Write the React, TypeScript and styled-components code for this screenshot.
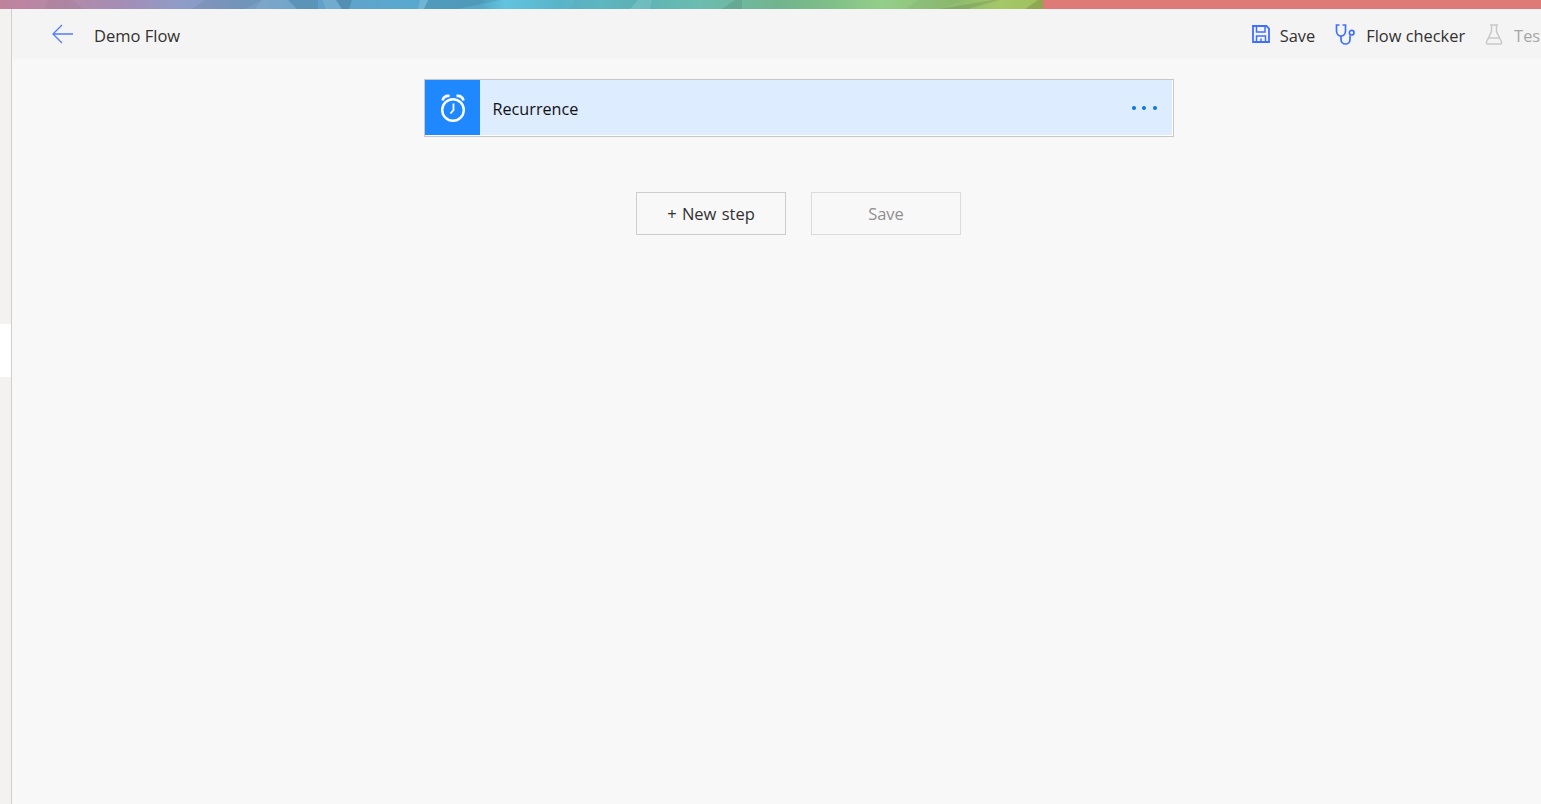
import React from 'react'
import styled, { createGlobalStyle } from 'styled-components'

const GlobalStyle = createGlobalStyle`
    html, body {
        margin: 0;
        padding: 0;
        height: 100%;
        overflow: hidden;
    }
    body {
        font-family: "Open Sans", "Noto Sans", sans-serif;
        background: #f8f8f8;
    }
`

const Page = styled.div`
    width: 1541px;
    height: 804px;
    display: flex;
    flex-direction: column;
    overflow: hidden;
`

const TopStrip = styled.div`
    flex: 0 0 9px;
    display: flex;
`
const Banner = styled.svg`
    flex: 0 0 1043px;
    height: 9px;
    display: block;
`
const RedBand = styled.div`
    flex: 1;
    background: #de7b76;
`

const Body = styled.div`
    flex: 1;
    display: flex;
    min-height: 0;
`

const Rail = styled.nav`
    flex: 0 0 11px;
    display: flex;
    flex-direction: column;
    background: #f3f2f1;
    border-right: 1px solid #cfcfcf;
    padding-top: 315px;
`
const RailActive = styled.div`
    height: 53px;
    background: #fff;
`

const Main = styled.main`
    flex: 1;
    min-width: 0;
    display: flex;
    flex-direction: column;
`

const Header = styled.header`
    flex: 0 0 50px;
    display: flex;
    align-items: center;
    background: #f4f4f4;
    padding-left: 39px;
    overflow: hidden;
`
const BackButton = styled.button`
    border: 0;
    background: none;
    padding: 0;
    width: 24px;
    height: 24px;
    margin-right: 19px;
    color: #4f7bff;
    cursor: pointer;
`
const Title = styled.span`
    font-size: 16.5px;
    line-height: 24px;
    padding-top: 3px;
    color: #323130;
`
const Actions = styled.div`
    margin-left: auto;
    margin-right: -5px;
    display: flex;
    align-items: center;
    gap: 20px;
    flex-shrink: 0;
`
const Action = styled.div<{ $disabled?: boolean }>`
    display: flex;
    align-items: center;
    gap: ${p => (p.$disabled ? '11px' : '10px')};
    font-size: 16.4px;
    line-height: 24px;
    white-space: nowrap;
    color: ${p => (p.$disabled ? '#a6a6a6' : '#323130')};
    span {
        padding-top: 3px;
    }
    svg {
        display: block;
        color: ${p => (p.$disabled ? '#c8c8c8' : '#3f6fff')};
    }
`

const Canvas = styled.section`
    flex: 1;
    display: flex;
    flex-direction: column;
    align-items: center;
    padding: 20px 0 0 44px;
    background: #f8f8f8;
`
const Card = styled.div`
    width: 750px;
    height: 58px;
    box-sizing: border-box;
    display: flex;
    align-items: stretch;
    border: 1px solid #c8c8c8;
    background: #deecff;
    box-shadow: inset -1px -1px 0 #fff;
`
const CardIcon = styled.div`
    flex: 0 0 55px;
    height: 55px;
    box-sizing: border-box;
    padding: 1px 0 0 1px;
    display: flex;
    align-items: center;
    justify-content: center;
    background: #2088ff;
    color: #fff;
`
const CardTitle = styled.div`
    flex: 1;
    padding-left: 13px;
    line-height: 58px;
    font-size: 16.2px;
    color: #111;
`
const Dots = styled.div`
    display: flex;
    align-items: center;
    gap: 6.5px;
    padding-right: 16px;
    height: 55px;
`
const Dot = styled.span`
    width: 4px;
    height: 4px;
    border-radius: 50%;
    background: #0a78d6;
`

const ButtonRow = styled.div`
    display: flex;
    gap: 25px;
    margin-top: 55px;
`
const StepButton = styled.button<{ $disabled?: boolean }>`
    width: 150px;
    height: 43px;
    padding: 0;
    background: transparent;
    font-family: inherit;
    font-size: 16.5px;
    word-spacing: 1px;
    border: 1px solid ${p => (p.$disabled ? '#dcdcdc' : '#cdcdcd')};
    color: ${p => (p.$disabled ? '#8f8f8f' : '#323130')};
`

const bannerStops: [number, string][] = [
    [0, '#c0819c'],
    [60, '#b58aa8'],
    [120, '#a58db5'],
    [180, '#8f9cc8'],
    [240, '#7a9cc4'],
    [300, '#64a0c8'],
    [400, '#5aa8d0'],
    [480, '#55a8c8'],
    [505, '#62c4e0'],
    [560, '#5ab4c8'],
    [600, '#62bcc8'],
    [650, '#5fb5b5'],
    [700, '#6cbcb0'],
    [780, '#72b48e'],
    [830, '#7fbf88'],
    [880, '#93cf8a'],
    [960, '#90bc70'],
    [1000, '#a4c868'],
    [1043, '#a0bf5c'],
]

// soft triangles over the gradient
const facets: [string, string, number][] = [
    ['48,0 72,0 84,9 44,9', '#000', 0.03],
    ['205,0 262,0 245,9 192,9', '#000', 0.05],
    ['262,0 288,0 297,9 255,9', '#fff', 0.08],
    ['288,0 318,0 318,9 297,9', '#000', 0.08],
    ['322,0 336,0 342,9 326,9', '#fff', 0.1],
    ['336,0 352,0 349,9 342,9', '#000', 0.12],
    ['420,0 428,0 424,9 418,9', '#fff', 0.15],
    ['428,0 500,0 458,9 424,9', '#000', 0.08],
    ['575,0 638,0 630,9 570,9', '#000', 0.03],
    ['638,0 652,0 650,9 630,9', '#fff', 0.1],
    ['735,0 742,0 742,9 722,9', '#000', 0.08],
    ['918,0 962,0 945,9 905,9', '#000', 0.03],
    ['992,0 1000,0 968,9 940,9', '#000', 0.09],
    ['1038,0 1043,0 1043,9 1025,9', '#000', 0.12],
]

const App: React.FC = () => (
    <React.Fragment>
        <GlobalStyle />
        <Page>
            <TopStrip>
                <Banner viewBox="0 0 1043 9" preserveAspectRatio="none">
                    <defs>
                        <linearGradient id="bannerFill" x1="0" x2="1" y1="0" y2="0">
                            {bannerStops.map(([x, color]) => (
                                <stop key={x} offset={x / 1043} stopColor={color} />
                            ))}
                        </linearGradient>
                    </defs>
                    <rect width="1043" height="9" fill="url(#bannerFill)" />
                    {facets.map(([points, fill, opacity]) => (
                        <polygon key={points} points={points} fill={fill} fillOpacity={opacity} />
                    ))}
                </Banner>
                <RedBand />
            </TopStrip>
            <Body>
                <Rail>
                    <RailActive />
                </Rail>
                <Main>
                    <Header>
                        <BackButton aria-label="Back">
                            <svg width="24" height="24" viewBox="0 0 24 24" fill="none" stroke="currentColor" strokeWidth="1.3">
                                <path d="M22 12H2M11 3l-9 9 9 9" />
                            </svg>
                        </BackButton>
                        <Title>Demo Flow</Title>
                        <Actions>
                            <Action>
                                <svg width="18" height="18" viewBox="0 0 18 18" fill="none" stroke="currentColor" strokeWidth="1.8">
                                    <path d="M1 1h13.500L17 3.500V17H1z" />
                                    <path d="M4.500 1v6h8.500V1M4.500 17v-6h9v6M9 13.500V17" strokeWidth="1.500" />
                                </svg>
                                <span>Save</span>
                            </Action>
                            <Action>
                                <svg width="21" height="21" viewBox="0 0 21 21" fill="none" stroke="currentColor" strokeWidth="1.700">
                                    <path d="M4.500 1H1.500v6c0 3 2.200 5 4.500 5s4.500-2 4.500-5V1h-3" />
                                    <path d="M6 12v3.500c0 2.500 2 4.500 4.500 4.500s4.500-2 4.500-4.500V11.500" />
                                    <circle cx="16.700" cy="8.700" r="2.300" />
                                </svg>
                                <span>Flow checker</span>
                            </Action>
                            <Action $disabled>
                                <svg width="18" height="21" viewBox="0 0 18 21" fill="none" stroke="currentColor" strokeWidth="1.500">
                                    <path d="M5 1h8M6.500 1v6.500L1.500 18c-.6 1.300.2 2 1.500 2h12c1.300 0 2.100-.7 1.500-2l-5-10.500V1" />
                                    <path d="M4 14h10" />
                                </svg>
                                <span>Test</span>
                            </Action>
                        </Actions>
                    </Header>
                    <Canvas>
                        <Card>
                            <CardIcon>
                                <svg width="26" height="28" viewBox="0 0 26 28" fill="none" stroke="currentColor" strokeWidth="2.400">
                                    <circle cx="13" cy="16" r="10.800" />
                                    <path d="M13.500 9.500V16l-3 3.500" strokeWidth="1.800" />
                                    <path d="M2.500 6.500C3.500 3 6 1.500 9.500 2M23.500 6.500C22.500 3 20 1.500 16.500 2" strokeWidth="2.600" />
                                </svg>
                            </CardIcon>
                            <CardTitle>Recurrence</CardTitle>
                            <Dots>
                                <Dot />
                                <Dot />
                                <Dot />
                            </Dots>
                        </Card>
                        <ButtonRow>
                            <StepButton>+ New step</StepButton>
                            <StepButton $disabled>Save</StepButton>
                        </ButtonRow>
                    </Canvas>
                </Main>
            </Body>
        </Page>
    </React.Fragment>
)

export default App
